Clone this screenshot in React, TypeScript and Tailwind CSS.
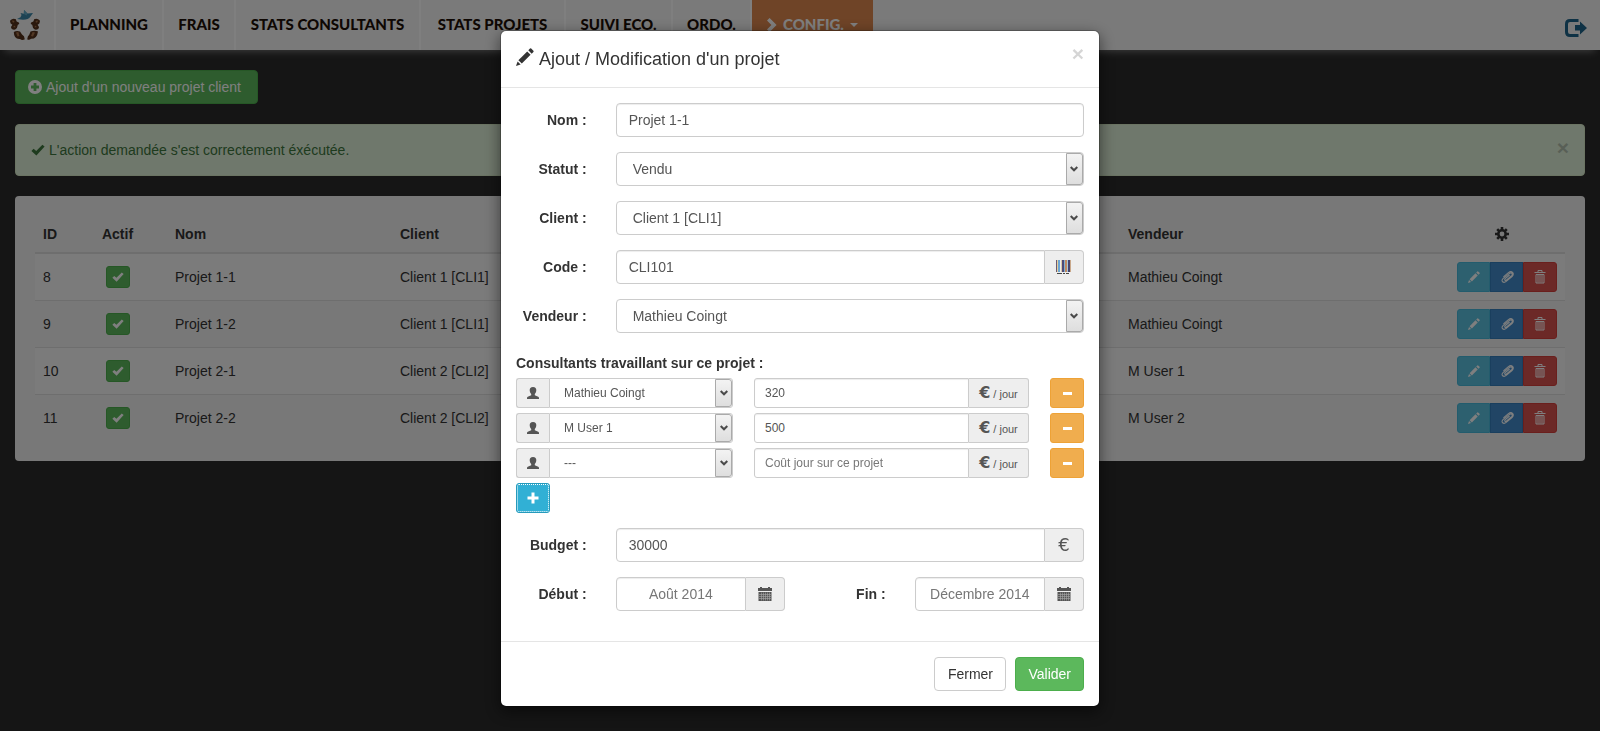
import type { ReactNode } from "react";

type Project = {
  id: number;
  name: string;
  client: string;
  seller: string;
};

const projects: Project[] = [
  { id: 8, name: "Projet 1-1", client: "Client 1 [CLI1]", seller: "Mathieu Coingt" },
  { id: 9, name: "Projet 1-2", client: "Client 1 [CLI1]", seller: "Mathieu Coingt" },
  { id: 10, name: "Projet 2-1", client: "Client 2 [CLI2]", seller: "M User 1" },
  { id: 11, name: "Projet 2-2", client: "Client 2 [CLI2]", seller: "M User 2" },
];

const consultants = [
  { name: "Mathieu Coingt", cost: "320" },
  { name: "M User 1", cost: "500" },
  { name: "---", cost: "" },
];

const navItems = [
  { label: "PLANNING", width: "w-[108px]" },
  { label: "FRAIS", width: "w-[72px]" },
  { label: "STATS CONSULTANTS", width: "w-[185px]" },
  { label: "STATS PROJETS", width: "w-[145px]" },
  { label: "SUIVI ECO.", width: "w-[107px]" },
  { label: "ORDO.", width: "w-[79px]" },
];

/* ---------- icons ---------- */

type IconProps = { className?: string };

function PencilIcon({ className = "size-3" }: IconProps) {
  return (
    <svg viewBox="0 0 18 18" className={className} fill="currentColor" aria-hidden="true">
      <path d="M0 18 L1.6 13.4 L4.6 16.4 Z" />
      <path d="M2.4 12.2 L11.2 3.4 L14.6 6.8 L5.8 15.6 Z" />
      <path d="M12.3 2.3 L14 0.6 Q14.6 0 15.2 0.6 L17.4 2.8 Q18 3.4 17.4 4 L15.7 5.7 Z" />
    </svg>
  );
}

function PaperclipIcon() {
  return (
    <svg viewBox="0 0 14 12" className="h-3 w-3.5" fill="none" stroke="currentColor" strokeWidth="1.1" aria-hidden="true">
      <path d="M9.6 4 L5.2 7.7 Q4.3 8.6 5 9.2 Q5.7 9.7 6.6 8.9 L11.6 4.6 Q12.9 3.2 11.8 2.2 Q10.7 1.4 9.2 2.6 L3 7.7 Q1.3 9.5 2.6 10.8 Q4.2 12 6.2 10.4 L12 5.6 Q14.2 3.2 12.6 1.4 Q10.8 -0.2 8.4 1.6 L3.4 5.8" />
    </svg>
  );
}

function TrashIcon() {
  return (
    <svg viewBox="0 0 12 14" className="h-3.5 w-3" fill="none" stroke="currentColor" aria-hidden="true">
      <path d="M0.5 2.5 H11.5 M4 2.5 V0.5 H8 V2.5 M2 4.5 H10 V13 H2 Z M4 4.5 V12.5 M6 4.5 V12.5 M8 4.5 V12.5" />
    </svg>
  );
}

function CheckIcon({ className = "size-3" }: IconProps) {
  return (
    <svg viewBox="0 0 14 12" className={className} fill="currentColor" aria-hidden="true">
      <path d="M0.4 7 L2.6 4.8 L5.2 7 L11.4 0.7 L13.6 2.6 L5.4 11.4 Z" />
    </svg>
  );
}

function PlusCircleIcon() {
  return (
    <svg viewBox="0 0 14 14" className="size-3.5" fill="currentColor" aria-hidden="true">
      <path
        fillRule="evenodd"
        d="M7 0 A7 7 0 1 1 7 14 A7 7 0 1 1 7 0 Z M5.6 3 V5.6 H3 V8.4 H5.6 V11 H8.4 V8.4 H11 V5.6 H8.4 V3 Z"
      />
    </svg>
  );
}

function GearIcon() {
  return (
    <svg viewBox="0 0 14 14" className="size-3.5" aria-hidden="true">
      <g stroke="currentColor" strokeWidth="2.6">
        <path d="M7 0 V14 M0 7 H14 M2.2 2.2 L11.8 11.8 M11.8 2.2 L2.2 11.8" />
      </g>
      <circle cx="7" cy="7" r="4.9" fill="currentColor" />
      <circle cx="7" cy="7" r="2.4" fill="#f1f1f1" />
    </svg>
  );
}

function UserIcon() {
  return (
    <svg viewBox="0 0 12 12" className="size-3" fill="currentColor" aria-hidden="true">
      <path d="M6 0 C8.4 0 9.4 1.3 9.3 3.2 C9.2 5 8.6 6.2 7.8 7 V8.2 L11.2 9.7 Q12 10.1 12 11 V12 H0 V11 Q0 10.1 0.8 9.7 L4.2 8.2 V7 C3.4 6.2 2.8 5 2.7 3.2 C2.6 1.3 3.6 0 6 0 Z" />
    </svg>
  );
}

function CalendarIcon() {
  return (
    <svg viewBox="0 0 14 14" className="size-3.5" aria-hidden="true">
      <path d="M2 0 H4 V1 H10 V0 H12 V1 H14 V4 H0 V1 H2 Z" fill="#555" />
      <path d="M0.5 5 H13.5 V14 H0.5 Z" fill="#555" />
      <path
        d="M1 7.5 H13 M1 9.5 H13 M1 11.5 H13 M3.5 5.5 V13.5 M5.5 5.5 V13.5 M7.5 5.5 V13.5 M9.5 5.5 V13.5 M11.5 5.5 V13.5"
        stroke="#aaa"
        strokeWidth="0.6"
      />
    </svg>
  );
}

function BarcodeIcon() {
  return (
    <svg viewBox="0 0 15 14" className="h-3.5 w-[15px]" shapeRendering="crispEdges" aria-hidden="true">
      <rect x="0" y="0" width="1" height="12" fill="#6b5a72" />
      <rect x="1" y="0" width="1" height="12" fill="#e3cf9c" />
      <rect x="2" y="0" width="2" height="12" fill="#6da6d4" />
      <rect x="5" y="0" width="1" height="12" fill="#d9c6a8" />
      <rect x="6" y="0" width="2" height="12" fill="#4c4a78" />
      <rect x="8" y="0" width="1" height="12" fill="#7fb0cf" />
      <rect x="9" y="0" width="2" height="12" fill="#c08a62" />
      <rect x="11" y="0" width="1" height="12" fill="#a8c6dd" />
      <rect x="12" y="0" width="2" height="12" fill="#48466e" />
      <rect x="14" y="0" width="1" height="12" fill="#c9a98c" />
      <path d="M1 13.5 H6 M7 13.5 H9 M10 13.5 H13" stroke="#444" />
    </svg>
  );
}

function LogoutIcon() {
  return (
    <svg viewBox="0 0 22 20" className="h-5 w-[22px]" aria-hidden="true">
      <path d="M13.5 2.5 H5 Q1.5 2.5 1.5 6 V14 Q1.5 17.5 5 17.5 H13.5" fill="none" stroke="currentColor" strokeWidth="3" />
      <path d="M10 7 H15 V3.5 L22 10 L15 16.5 V12.5 H10 Z" fill="currentColor" />
    </svg>
  );
}

function Logo() {
  return (
    <svg viewBox="0 0 30 30" className="size-[30px]" role="img" aria-label="Accueil">
      <path
        d="M7 9 L10.5 7.2 L11.5 5 L10.5 3 L14 3.8 L14 0 L17.5 3.4 L23 3 L20.5 6.4 Q18.5 9.6 13 9.8 Z"
        fill="#3a86a8"
      />
      <path d="M14 0 L17.5 3.4 L16.5 5.6 L13.6 3.8 Z" fill="#62a9c4" />
      <g fill="#54301a">
        <path d="M0.2 10.5 Q2.5 7.8 6 9.2 Q5.6 11.6 8.8 12.6 Q10 14.2 7.8 14.8 Q7.6 18 5.2 19.6 Q1.4 20.2 1 17 L2.4 14.8 Q-0.4 13.4 0.2 10.5 Z" />
        <path d="M29.8 10.5 Q27.5 7.8 24 9.2 Q24.4 11.6 21.2 12.6 Q20 14.2 22.2 14.8 Q22.4 18 24.8 19.6 Q28.6 20.2 29 17 L27.6 14.8 Q30.4 13.4 29.8 10.5 Z" />
        <path d="M3.8 22 Q6.5 20.2 10 21.4 L12 24.4 Q15 26 14.6 29.6 Q11.8 30.6 10 29 Q4 29.6 3.8 22 Z" />
        <path d="M28 21.4 Q25 20.2 20.5 21.4 L19.4 24.4 Q17 26.4 17.4 29.6 Q19.4 30.4 21 28.8 Q27 29 28 21.4 Z" />
      </g>
      <g fill="#a5714a">
        <path d="M2 10.8 Q4 9.8 4.6 12 L3 12.8 Z M28 10.8 Q26 9.8 25.4 12 L27 12.8 Z M3 17 L5 15.4 L5.4 17.4 Z M27 17 L25 15.4 L24.6 17.4 Z" />
        <path d="M6 22.5 L8.4 22 L9.4 26 L7.5 26.4 Z M25 22.5 L22.6 22 L21 26 L23 26.4 Z" />
      </g>
    </svg>
  );
}

/* ---------- form parts ---------- */

function SelectField({
  id,
  label,
  options,
  small = false,
}: {
  id?: string;
  label?: string;
  options: string[];
  small?: boolean;
}) {
  return (
    <div className="relative min-w-0 flex-1">
      <select
        id={id}
        aria-label={label}
        className={
          small
            ? "block h-[30px] w-full appearance-none rounded-r-[3px] border border-[#ccc] bg-white pr-5 pl-3.5 text-xs text-[#555]"
            : "block h-[34px] w-full appearance-none rounded border border-[#ccc] bg-white pr-5 pl-4 text-sm text-[#555]"
        }
      >
        {options.map((option) => (
          <option key={option}>{option}</option>
        ))}
      </select>
      <span className="pointer-events-none absolute inset-y-px right-px flex w-[17px] items-center justify-center rounded-r-[3px] border border-[#aaa] bg-linear-to-b from-[#f3f3f3] to-[#dedede]">
        <svg viewBox="0 0 8 6" className="h-1.5 w-2" fill="none" stroke="#4a4a4a" strokeWidth="2" aria-hidden="true">
          <path d="M0.7 1 L4 4.3 L7.3 1" />
        </svg>
      </span>
    </div>
  );
}

function FieldLabel({ htmlFor, children }: { htmlFor: string; children: ReactNode }) {
  return (
    <label htmlFor={htmlFor} className="col-span-2 pt-[7px] pr-3.5 text-right font-bold whitespace-nowrap">
      {children}
    </label>
  );
}

function Addon({ children }: { children: ReactNode }) {
  return (
    <span className="flex w-[39px] shrink-0 items-center justify-center rounded-r border border-l-0 border-[#ccc] bg-[#eee] text-lg text-[#555]">
      {children}
    </span>
  );
}

const inputClass =
  "block h-[34px] w-full min-w-0 border border-[#ccc] bg-white px-3 text-sm text-[#555] shadow-[inset_0_1px_1px_rgba(0,0,0,0.075)]";

function ProjectModal() {
  return (
    <div
      role="dialog"
      aria-labelledby="modal-title"
      className="w-[600px] rounded-md border border-black/20 bg-white bg-clip-padding shadow-[0_5px_15px_rgba(0,0,0,0.5)]"
    >
      <div className="flex items-start justify-between border-b border-[#e5e5e5] p-[15px]">
        <h4 id="modal-title" className="flex h-[26px] items-center gap-[5px] text-lg">
          <PencilIcon className="mb-1 size-[18px]" />
          <span>Ajout / Modification d'un projet</span>
        </h4>
        <button type="button" aria-label="Fermer la fenêtre" className="text-[21px] leading-4 font-bold opacity-20">
          ×
        </button>
      </div>

      <form className="flex flex-col gap-[15px] pt-[15px] pb-[30px]">
        <div className="grid grid-cols-12">
          <FieldLabel htmlFor="nom">Nom :</FieldLabel>
          <div className="col-span-10 px-[15px]">
            <input id="nom" type="text" defaultValue="Projet 1-1" className={inputClass + " rounded"} />
          </div>
        </div>

        <div className="grid grid-cols-12">
          <FieldLabel htmlFor="statut">Statut :</FieldLabel>
          <div className="col-span-10 px-[15px]">
            <SelectField id="statut" options={["Vendu"]} />
          </div>
        </div>

        <div className="grid grid-cols-12">
          <FieldLabel htmlFor="client">Client :</FieldLabel>
          <div className="col-span-10 px-[15px]">
            <SelectField id="client" options={["Client 1 [CLI1]", "Client 2 [CLI2]"]} />
          </div>
        </div>

        <div className="grid grid-cols-12">
          <FieldLabel htmlFor="code">Code :</FieldLabel>
          <div className="col-span-10 flex px-[15px]">
            <input id="code" type="text" defaultValue="CLI101" className={inputClass + " rounded-l"} />
            <Addon>
              <BarcodeIcon />
            </Addon>
          </div>
        </div>

        <div className="grid grid-cols-12">
          <FieldLabel htmlFor="vendeur">Vendeur :</FieldLabel>
          <div className="col-span-10 px-[15px]">
            <SelectField id="vendeur" options={["Mathieu Coingt", "M User 1", "M User 2"]} />
          </div>
        </div>

        <div role="group" aria-labelledby="consultants-title" className="flex flex-col gap-[5px] px-[15px] pt-[5px]">
          <p id="consultants-title" className="font-bold">
            Consultants travaillant sur ce projet :
          </p>
          {consultants.map((consultant) => (
            <div key={consultant.name} className="grid grid-cols-[217fr_275fr_34px] gap-[21px]">
              <div className="flex">
                <span className="flex w-[33px] shrink-0 items-center justify-center rounded-l-[3px] border border-r-0 border-[#ccc] bg-[#eee] text-[#555]">
                  <UserIcon />
                </span>
                <SelectField small label="Consultant" options={[consultant.name]} />
              </div>
              <div className="flex">
                <input
                  type="text"
                  aria-label="Coût jour"
                  defaultValue={consultant.cost}
                  placeholder="Coût jour sur ce projet"
                  className="block h-[30px] w-full min-w-0 rounded-l-[3px] border border-[#ccc] bg-white px-2.5 text-xs text-[#555] shadow-[inset_0_1px_1px_rgba(0,0,0,0.075)] placeholder:text-[#777]"
                />
                <span className="flex w-[60px] shrink-0 items-center justify-center gap-[3px] rounded-r-[3px] border border-l-0 border-[#ccc] bg-[#eee] whitespace-nowrap text-[#555]">
                  <b className="font-['DejaVu_Sans',sans-serif] text-base leading-5">€</b>
                  <span className="pt-0.5 text-[11px] leading-4">/ jour</span>
                </span>
              </div>
              <button
                type="button"
                aria-label="Retirer ce consultant"
                className="flex h-[30px] items-center justify-center rounded-[3px] border border-[#eea236] bg-[#f0ad4e]"
              >
                <span className="h-[3px] w-[9px] bg-white" />
              </button>
            </div>
          ))}
          <button
            type="button"
            aria-label="Ajouter un consultant"
            className="flex h-[30px] w-[34px] items-center justify-center rounded-[3px] border border-[#269abc] bg-[#31b0d5] text-white outline-1 -outline-offset-2 outline-white outline-dotted"
          >
            <svg viewBox="0 0 12 12" className="size-3" fill="currentColor" aria-hidden="true">
              <path d="M4.5 0.5 H7.5 V4.5 H11.5 V7.5 H7.5 V11.5 H4.5 V7.5 H0.5 V4.5 H4.5 Z" />
            </svg>
          </button>
        </div>

        <div className="grid grid-cols-12">
          <FieldLabel htmlFor="budget">Budget :</FieldLabel>
          <div className="col-span-10 flex px-[15px]">
            <input id="budget" type="text" defaultValue="30000" className={inputClass + " rounded-l"} />
            <Addon>
              <span className="font-['DejaVu_Sans',sans-serif]">€</span>
            </Addon>
          </div>
        </div>

        <div className="grid grid-cols-12">
          <FieldLabel htmlFor="debut">Début :</FieldLabel>
          <div className="col-span-4 flex px-[15px]">
            <input
              id="debut"
              type="text"
              placeholder="Août 2014"
              className={inputClass + " rounded-l text-center placeholder:text-[#777]"}
            />
            <Addon>
              <CalendarIcon />
            </Addon>
          </div>
          <FieldLabel htmlFor="fin">Fin :</FieldLabel>
          <div className="col-span-4 flex px-[15px]">
            <input
              id="fin"
              type="text"
              placeholder="Décembre 2014"
              className={inputClass + " rounded-l text-center placeholder:text-[#777]"}
            />
            <Addon>
              <CalendarIcon />
            </Addon>
          </div>
        </div>
      </form>

      <div className="flex justify-end gap-[9px] border-t border-[#e5e5e5] p-[15px]">
        <button type="button" className="h-[34px] w-[72px] rounded border border-[#ccc] bg-white">
          Fermer
        </button>
        <button type="submit" className="h-[34px] rounded border border-[#4cae4c] bg-[#5cb85c] px-3 text-white">
          Valider
        </button>
      </div>
    </div>
  );
}

/* ---------- page ---------- */

function NavBar() {
  return (
    <nav className="flex h-[50px] items-stretch bg-[#f4f4f4] font-['Lato',sans-serif] text-[15px] font-black text-[#1c0e06] shadow-[0_6px_8px_-5px_rgba(255,255,255,0.4)]">
      <a href="#" className="flex w-14 items-center border-r-2 border-white pl-2.5">
        <Logo />
      </a>
      {navItems.map((item) => (
        <a
          key={item.label}
          href="#"
          className={"flex items-center justify-center border-r-2 border-white whitespace-nowrap " + item.width}
        >
          {item.label}
        </a>
      ))}
      <a href="#" className="flex w-[121px] items-center justify-center gap-1.5 bg-[#de884e] text-white">
        <svg viewBox="0 0 10 14" className="h-3.5 w-2.5" fill="currentColor" aria-hidden="true">
          <path d="M0 2.6 L2.6 0 L9.6 7 L2.6 14 L0 11.4 L4.4 7 Z" />
        </svg>
        CONFIG.
        <svg viewBox="0 0 8 4" className="h-1 w-2" fill="currentColor" aria-hidden="true">
          <path d="M0 0 H8 L4 4 Z" />
        </svg>
      </a>
      <a href="#" aria-label="Déconnexion" className="ml-auto flex items-center pt-1.5 pr-[13px] text-[#1f648a]">
        <LogoutIcon />
      </a>
    </nav>
  );
}

function ProjectTable() {
  return (
    <div className="rounded bg-[#f1f1f1] p-5">
      <table className="w-full table-fixed border-collapse">
        <colgroup>
          <col className="w-[33px]" />
          <col className="w-[99px]" />
          <col className="w-[225px]" />
          <col />
          <col className="w-[319px]" />
          <col className="w-[126px]" />
        </colgroup>
        <thead>
          <tr className="text-left">
            <th className="p-2">ID</th>
            <th className="p-2 text-center">Actif</th>
            <th className="p-2">Nom</th>
            <th className="p-2">Client</th>
            <th className="p-2">Vendeur</th>
            <th className="p-2">
              <div className="flex justify-center">
                <GearIcon />
              </div>
            </th>
          </tr>
        </thead>
        <tbody className="border-t-2 border-[#ddd]">
          {projects.map((project) => (
            <tr key={project.id} className="border-t border-[#ddd] odd:bg-[#f6f6f6] first:border-t-2">
              <td className="p-2">{project.id}</td>
              <td className="p-2">
                <button
                  type="button"
                  aria-label="Actif"
                  className="mx-auto flex h-[22px] w-6 items-center justify-center rounded-[3px] border border-[#4cae4c] bg-[#5cb85c] text-white"
                >
                  <CheckIcon />
                </button>
              </td>
              <td className="p-2">{project.name}</td>
              <td className="p-2">{project.client}</td>
              <td className="p-2">{project.seller}</td>
              <td className="p-2">
                <div className="flex h-[30px] justify-end text-white">
                  <button
                    type="button"
                    aria-label="Modifier"
                    className="flex w-[33px] items-center justify-center rounded-l-[3px] border border-[#46b8da] bg-[#5bc0de]"
                  >
                    <PencilIcon />
                  </button>
                  <button
                    type="button"
                    aria-label="Pièces jointes"
                    className="flex w-[33px] items-center justify-center border border-[#357ebd] bg-[#428bca]"
                  >
                    <PaperclipIcon />
                  </button>
                  <button
                    type="button"
                    aria-label="Supprimer"
                    className="flex w-[34px] items-center justify-center rounded-r-[3px] border border-[#d43f3a] bg-[#d9534f]"
                  >
                    <TrashIcon />
                  </button>
                </div>
              </td>
            </tr>
          ))}
        </tbody>
      </table>
    </div>
  );
}

export default function App() {
  return (
    <div className="min-h-screen bg-[#2a2a2a] font-['Liberation_Sans',Arial,sans-serif] text-sm text-[#333]">
      <NavBar />
      <main className="flex flex-col items-stretch gap-5 px-[15px] pt-5">
        <button
          type="button"
          className="flex h-[34px] w-[243px] items-center gap-1 self-start rounded border border-[#4cae4c] bg-[#5cb85c] px-3 text-white"
        >
          <PlusCircleIcon />
          Ajout d'un nouveau projet client
        </button>

        <div className="flex h-[52px] items-center justify-between rounded border border-[#d6e9c6] bg-[#dff0d8] px-[15px] text-[#3c763d]">
          <p className="flex items-center gap-1">
            <CheckIcon className="h-3 w-3.5" />
            L'action demandée s'est correctement éxécutée.
          </p>
          <button type="button" aria-label="Fermer le message" className="pb-1 text-[21px] leading-5 font-bold text-black opacity-20">
            ×
          </button>
        </div>

        <ProjectTable />
      </main>

      <div className="fixed inset-0 flex items-start justify-center overflow-auto bg-black/50 pt-[30px]">
        <ProjectModal />
      </div>
    </div>
  );
}
